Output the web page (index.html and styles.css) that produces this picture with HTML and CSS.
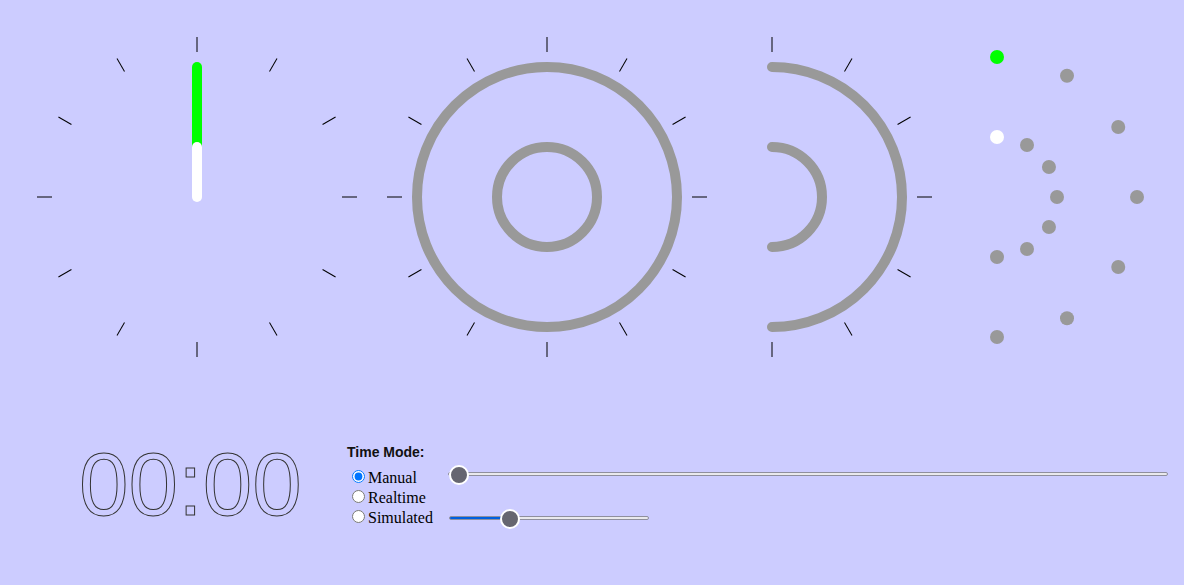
FILE: index.html
```html
<!DOCTYPE html>
<html lang="en">
<head>
<meta charset="utf-8">
<title>Clocks</title>
<link rel="stylesheet" href="styles.css">
</head>
<body>
<main class="page">
  <section class="clocks">
    <svg class="clock c1" width="320" height="320" viewBox="-160 -160 320 320">
      <g class="ticks">
        <line y1="-145" y2="-160"/>
        <line y1="-145" y2="-160" transform="rotate(30)"/>
        <line y1="-145" y2="-160" transform="rotate(60)"/>
        <line y1="-145" y2="-160" transform="rotate(90)"/>
        <line y1="-145" y2="-160" transform="rotate(120)"/>
        <line y1="-145" y2="-160" transform="rotate(150)"/>
        <line y1="-145" y2="-160" transform="rotate(180)"/>
        <line y1="-145" y2="-160" transform="rotate(210)"/>
        <line y1="-145" y2="-160" transform="rotate(240)"/>
        <line y1="-145" y2="-160" transform="rotate(270)"/>
        <line y1="-145" y2="-160" transform="rotate(300)"/>
        <line y1="-145" y2="-160" transform="rotate(330)"/>
      </g>
      <line class="hand hand-green" x1="0" y1="-130" x2="0" y2="-50"/>
      <line class="hand hand-white" x1="0" y1="-50" x2="0" y2="0"/>
    </svg>
    <svg class="clock c2" width="320" height="320" viewBox="-160 -160 320 320">
      <g class="ticks">
        <line y1="-145" y2="-160"/>
        <line y1="-145" y2="-160" transform="rotate(30)"/>
        <line y1="-145" y2="-160" transform="rotate(60)"/>
        <line y1="-145" y2="-160" transform="rotate(90)"/>
        <line y1="-145" y2="-160" transform="rotate(120)"/>
        <line y1="-145" y2="-160" transform="rotate(150)"/>
        <line y1="-145" y2="-160" transform="rotate(180)"/>
        <line y1="-145" y2="-160" transform="rotate(210)"/>
        <line y1="-145" y2="-160" transform="rotate(240)"/>
        <line y1="-145" y2="-160" transform="rotate(270)"/>
        <line y1="-145" y2="-160" transform="rotate(300)"/>
        <line y1="-145" y2="-160" transform="rotate(330)"/>
      </g>
      <circle class="ring" r="130"/>
      <circle class="ring" r="50"/>
    </svg>
    <svg class="clock c3" width="170" height="320" viewBox="-5 -160 170 320">
      <g class="ticks">
        <line y1="-145" y2="-160"/>
        <line y1="-145" y2="-160" transform="rotate(30)"/>
        <line y1="-145" y2="-160" transform="rotate(60)"/>
        <line y1="-145" y2="-160" transform="rotate(90)"/>
        <line y1="-145" y2="-160" transform="rotate(120)"/>
        <line y1="-145" y2="-160" transform="rotate(150)"/>
        <line y1="-145" y2="-160" transform="rotate(180)"/>
      </g>
      <path class="ring" d="M0,-130 A130,130 0 0 1 0,130"/>
      <path class="ring" d="M0,-50 A50,50 0 0 1 0,50"/>
    </svg>
    <svg class="clock c4" width="160" height="320" viewBox="-10 -160 160 320">
      <circle class="dot green" cx="0" cy="-140" r="7"/>
      <circle class="dot" cx="70" cy="-121.24" r="7"/>
      <circle class="dot" cx="121.24" cy="-70" r="7"/>
      <circle class="dot" cx="140" cy="0" r="7"/>
      <circle class="dot" cx="121.24" cy="70" r="7"/>
      <circle class="dot" cx="70" cy="121.24" r="7"/>
      <circle class="dot" cx="0" cy="140" r="7"/>
      <circle class="dot white" cx="0" cy="-60" r="7"/>
      <circle class="dot" cx="30" cy="-51.96" r="7"/>
      <circle class="dot" cx="51.96" cy="-30" r="7"/>
      <circle class="dot" cx="60" cy="0" r="7"/>
      <circle class="dot" cx="51.96" cy="30" r="7"/>
      <circle class="dot" cx="30" cy="51.96" r="7"/>
      <circle class="dot" cx="0" cy="60" r="7"/>
    </svg>
  </section>

  <section class="bottom">
    <div class="digital">00:00</div>
    <div class="controls">
      <div class="mode-title">Time Mode:</div>
      <div class="mode-body">
        <div class="radios">
          <input type="radio" name="mode" id="m-manual" checked><label for="m-manual">Manual</label><br>
          <input type="radio" name="mode" id="m-real"><label for="m-real">Realtime</label><br>
          <input type="radio" name="mode" id="m-sim"><label for="m-sim">Simulated</label>
        </div>
        <div class="sliders">
          <input class="range range-time" type="range" min="0" max="100" value="0">
          <input class="range range-speed" type="range" min="0" max="100" value="28" style="--fill: 30.3%">
        </div>
      </div>
    </div>
  </section>
</main>
</body>
</html>
```

FILE: styles.css
```css
html, body {
  margin: 0;
  padding: 0;
  background: #ccccff;
}

body {
  font-family: "Liberation Serif", "Times New Roman", serif;
  font-size: 16px;
}

svg {
  display: block;
  overflow: visible;
}

.clocks {
  display: flex;
  align-items: flex-start;
  padding: 37px 0 0 37px;
}

.c2 { margin-left: 30px; }
.c3 { margin-left: 60px; }
.c4 { margin-left: 50px; }

.ticks line {
  stroke: #000;
  stroke-width: 1;
}

.hand {
  stroke-width: 10;
  stroke-linecap: round;
}
.hand-green { stroke: #00ff00; }
.hand-white { stroke: #ffffff; }

.ring {
  fill: none;
  stroke: #999999;
  stroke-width: 10;
  stroke-linecap: round;
}

.dot { fill: #999999; }
.dot.green { fill: #00ff00; }
.dot.white { fill: #ffffff; }

.bottom {
  display: flex;
  align-items: flex-start;
  margin-top: 83px;
}

.digital {
  width: 268px;
  margin-left: 79px;
  font-family: "Liberation Sans", Arial, sans-serif;
  font-size: 89px;
  line-height: 89px;
  color: transparent;
  -webkit-text-stroke: 1px #333;
  white-space: nowrap;
}

.controls {
  margin-top: 4px;
  flex: 1;
  padding-right: 16px;
}

.mode-title {
  font-family: "Liberation Sans", Arial, sans-serif;
  font-weight: bold;
  font-size: 14px;
  line-height: 16px;
  color: #111;
}

.mode-body {
  display: flex;
  align-items: flex-start;
  margin-top: 7px;
}

.radios {
  width: 100px;
  flex: none;
  font-family: "Liberation Serif", "Times New Roman", serif;
  font-size: 16px;
  color: #000;
  white-space: nowrap;
}

.sliders {
  flex: 1;
  display: flex;
  flex-direction: column;
  align-items: flex-start;
  margin-top: -3px;
}

.range {
  -webkit-appearance: none;
  appearance: none;
  display: block;
  background: transparent;
  height: 20px;
  margin: 0;
  padding: 0;
}

.range-time {
  width: 720px;
  margin-left: 1px;
}

.range-speed {
  width: 200px;
  margin-left: 2px;
  margin-top: 24px;
}

.range::-webkit-slider-runnable-track {
  height: 4px;
  background: #e9e9ed;
  border: 1px solid #8f8f9d;
  border-radius: 3px;
}

.range-speed::-webkit-slider-runnable-track {
  background: linear-gradient(to right, #0060df 0, #0060df var(--fill), #e9e9ed var(--fill));
}

.range::-webkit-slider-thumb {
  -webkit-appearance: none;
  appearance: none;
  width: 20px;
  height: 20px;
  box-sizing: border-box;
  border-radius: 50%;
  background: #666670;
  border: 2px solid #ffffff;
  margin-top: -8px;
}
```
